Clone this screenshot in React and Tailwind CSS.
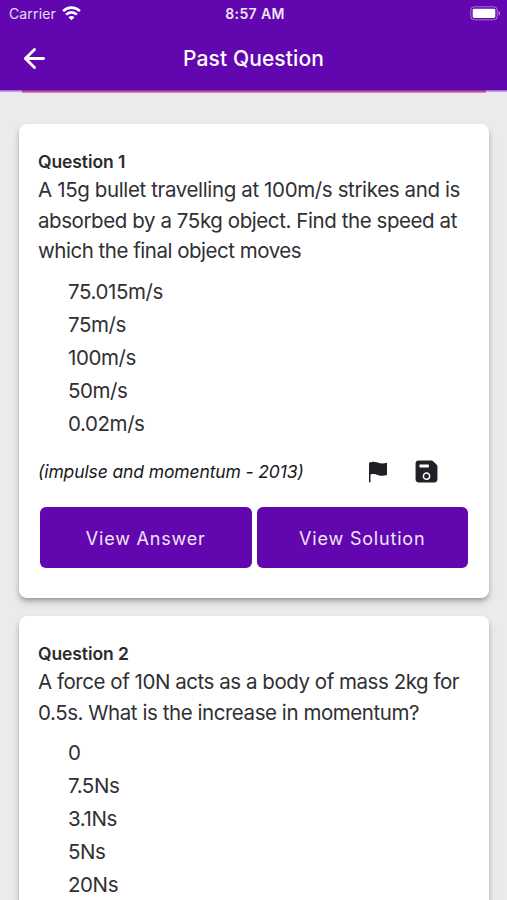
import React from "react";
import { IoSave } from "react-icons/io5";
import { ArrowLeft } from "lucide-react";

const questions = [
  {
    id: 1,
    lines: [
      { text: "A 15g bullet travelling at 100m/s strikes and is", tone: "tracking-[-0.37px]" },
      { text: "absorbed by a 75kg object. Find the speed at", tone: "tracking-[-0.42px]" },
      { text: "which the final object moves", tone: "tracking-[-0.48px]" },
    ],
    options: ["75.015m/s", "75m/s", "100m/s", "50m/s", "0.02m/s"],
    topic: "(impulse and momentum - 2013)",
  },
  {
    id: 2,
    lines: [
      { text: "A force of 10N acts as a body of mass 2kg for", tone: "tracking-[-0.46px]" },
      { text: "0.5s. What is the increase in momentum?", tone: "tracking-[-0.44px]" },
    ],
    options: ["0", "7.5Ns", "3.1Ns", "5Ns", "20Ns"],
  },
];

function WifiIcon() {
  return (
    <svg width="19" height="15" viewBox="0 0 19 15" fill="none" stroke="white" strokeWidth="2.6">
      <path d="M1.1 5.1a12 12 0 0 1 16.8 0" />
      <path d="M4.1 8.6a7.7 7.7 0 0 1 10.8 0" />
      <path d="M9.5 14.2 6.5 11.2a4.2 4.2 0 0 1 6 0z" fill="white" stroke="none" />
    </svg>
  );
}

function BatteryIcon() {
  return (
    <svg width="31" height="15" viewBox="0 0 31 15">
      <rect x="0.8" y="0.8" width="26.4" height="13" rx="3.4" fill="none" stroke="white" strokeOpacity="0.45" />
      <rect x="2.7" y="2.7" width="22.6" height="9.2" rx="1.4" fill="white" />
      <path d="M28.6 5.2c2 .6 2 3.8 0 4.4z" fill="white" fillOpacity="0.5" />
    </svg>
  );
}

function FlagIcon() {
  return (
    <svg width="20" height="22" viewBox="0 0 20 22" fill="currentColor">
      <path d="M1 1.7C4.5.2 7.2.7 9.6 1.6c3 1.1 5.8 1.3 9.4.2v12.3c-3.4 1.1-6.400.9-9.400-.2-2.500-.9-4.600-1.100-7.100-.3v7.600H1z" />
    </svg>
  );
}

function StatusBar() {
  return (
    <div className="grid h-[27px] grid-cols-3 items-center pl-[9px] pr-[6px] leading-none">
      <div className="flex items-center gap-[6px]">
        <span className="text-[14px] tracking-[0.01em] text-white/85">Carrier</span>
        <WifiIcon />
      </div>
      <span className="text-center text-[14px] font-semibold tracking-[0.025em] whitespace-nowrap text-white/90">8:57 AM</span>
      <div className="flex justify-end">
        <BatteryIcon />
      </div>
    </div>
  );
}

function Header() {
  return (
    <div className="grid h-[63px] grid-cols-[60px_1fr_60px] items-center">
      <button type="button" aria-label="Back" className="pl-[19px]">
        <ArrowLeft size={31} strokeWidth={2.2} />
      </button>
      <h1 className="pt-px text-center text-[21px] font-medium tracking-[0.005em]">Past Question</h1>
    </div>
  );
}

function ActionButton({ children }) {
  return (
    <button type="button" className="h-[61px] flex-1 rounded-[6px] bg-[#6206af] pt-[2px] text-[18px] tracking-[0.045em] text-white/90">
      {children}
    </button>
  );
}

function QuestionCard({ question }) {
  return (
    <section className="h-[474px] rounded-[8px] bg-white px-[19px] pt-[26px] shadow-[0_3px_5px_-1px_rgba(0,0,0,0.3),0_5px_9px_rgba(0,0,0,0.12)]">
      <h2 className="text-[17.5px] leading-6 font-semibold tracking-[-0.005em] text-[#2b2b2f]">Question {question.id}</h2>
      <p className="pt-px text-[20.5px] leading-[30.7px] whitespace-nowrap">
        {question.lines.map((line) => (
          <span key={line.text} className={`block ${line.tone}`}>{line.text}</span>
        ))}
      </p>
      <ul className="pt-2 pl-[30px] text-[20.5px] leading-[33px] tracking-[-0.02em]">
        {question.options.map((option) => (
          <li key={option}>{option}</li>
        ))}
      </ul>
      {question.topic && (
        <>
          <div className="mt-[15px] flex h-[34px] items-center justify-between pr-[31px]">
            <span className="text-[17.5px] tracking-[-0.12px] text-[#18181c] italic">{question.topic}</span>
            <div className="flex items-center gap-[26px] pb-px text-[#1f2127]">
              <FlagIcon />
              <IoSave size={25} />
            </div>
          </div>
          <div className="mt-[18px] flex gap-[5px] px-[2px]">
            <ActionButton>View Answer</ActionButton>
            <ActionButton>View Solution</ActionButton>
          </div>
        </>
      )}
    </section>
  );
}

export default function App() {
  return (
    <div className="h-[900px] overflow-hidden bg-[#eaeceb] font-['Inter','Liberation_Sans',sans-serif] text-[#303034]">
      <header className="bg-[#6206af] text-white">
        <StatusBar />
        <Header />
      </header>
      <div className="h-[3px] bg-linear-to-b from-[#8a48c6] to-white pr-[21px] pl-[22px]">
        <div className="h-full bg-linear-to-b from-[#7a06a0] to-[#fb8f9c]" />
      </div>
      <main className="flex flex-col gap-[18px] pt-[31px] pr-[18px] pl-[19px]">
        {questions.map((question) => (
          <QuestionCard key={question.id} question={question} />
        ))}
      </main>
    </div>
  );
}
